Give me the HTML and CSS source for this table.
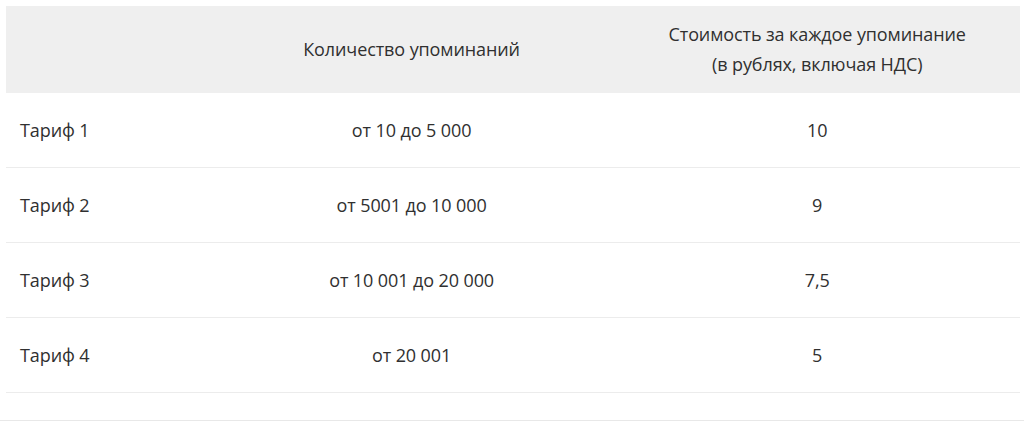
FILE: index.html
```html
<!DOCTYPE html>
<html lang="ru">
<head>
<meta charset="utf-8">
<link rel="stylesheet" href="styles.css">
</head>
<body>
<div class="page">
  <table class="tariffs">
    <colgroup>
      <col class="c1"><col class="c2"><col class="c3">
    </colgroup>
    <thead>
      <tr>
        <th></th>
        <th>Количество упоминаний</th>
        <th>Стоимость за каждое упоминание<br>(в рублях, включая НДС)</th>
      </tr>
    </thead>
    <tbody>
      <tr><td>Тариф 1</td><td>от 10 до 5 000</td><td>10</td></tr>
      <tr><td>Тариф 2</td><td>от 5001 до 10 000</td><td>9</td></tr>
      <tr><td>Тариф 3</td><td>от 10 001 до 20 000</td><td>7,5</td></tr>
      <tr><td>Тариф 4</td><td>от 20 001</td><td>5</td></tr>
    </tbody>
  </table>
</div>
</body>
</html>
```
FILE: styles.css
```css
html, body {
  margin: 0;
  padding: 0;
  background: #ffffff;
}
.page {
  height: 421px;
  box-sizing: border-box;
  padding: 6px 4px 0 6px;
  border-bottom: 1px solid #e8e8e8;
  overflow: hidden;
}
.tariffs {
  width: 100%;
  border-collapse: collapse;
  table-layout: fixed;
  font-family: "Open Sans", "Noto Sans", sans-serif;
  font-size: 18px;
  letter-spacing: -0.1px;
  line-height: 30px;
  color: #303030;
}
.c1 { width: 20%; }
.c2 { width: 40%; }
.c3 { width: 40%; }
.tariffs thead th {
  background: #efefef;
  font-weight: 400;
  text-align: center;
  padding: 13px 0 14px;
  height: 60px;
}
.tariffs tbody td {
  text-align: center;
  padding: 22px 0;
  height: 30px;
  border-bottom: 1px solid #ececec;
}
.tariffs tbody td:first-child {
  text-align: left;
  padding-left: 14px;
}
```
